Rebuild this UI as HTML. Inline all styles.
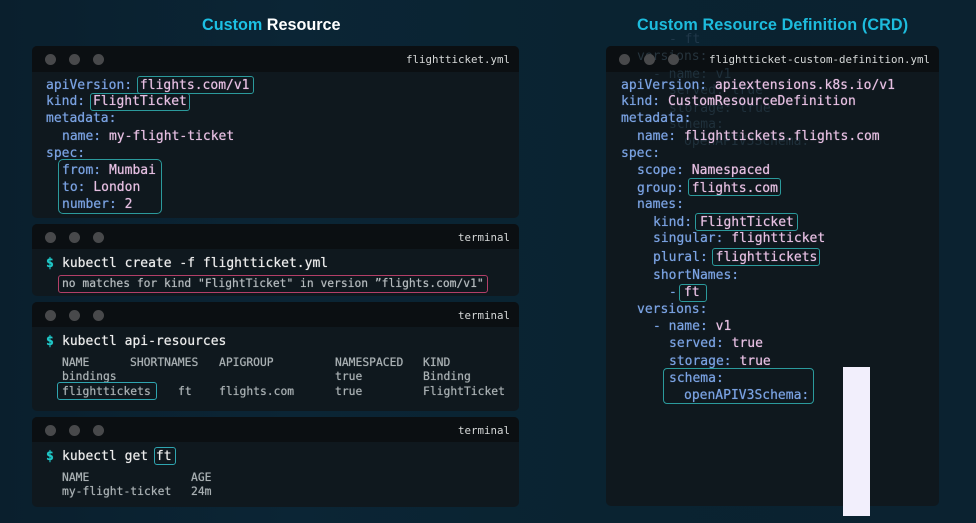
<!DOCTYPE html>
<html><head><meta charset="utf-8">
<style>
html,body{margin:0;padding:0}
body{width:976px;height:523px;overflow:hidden;position:relative;background:linear-gradient(90deg,#0a1f2d 0%,#0b2535 30%,#0a2331 60%,#0b2230 100%);font-family:"DejaVu Sans Mono","Liberation Mono",monospace}
div{position:absolute;box-sizing:border-box}
.p{background:#0f181e;border-radius:5px}
.h{left:0;top:0;right:0;height:26px;background:#0b0f12;border-radius:5px 5px 0 0}
.d{width:11px;height:11px;border-radius:50%;background:#48494b;top:8px}
.t{white-space:pre;font-size:13px;line-height:16px;height:16px;color:#e6bfe2;text-shadow:0 0 .6px currentColor}
.k{color:#7aa2e2}.v{color:#e6bfe2}
.c{color:#ececec;font-size:13px}
.s{font-size:11.35px;color:#a9b0b3}
.e{font-size:11.3px;color:#b4babd}
.f{font-size:10.8px;color:#d6d8d8;white-space:pre;line-height:16px;height:16px}
.b{border:1.2px solid #2b9a9c;border-radius:3px}
.g{color:#1f303b;white-space:pre;font-size:13px;line-height:16px;height:16px}
.ti{font-family:"Liberation Sans",sans-serif;font-weight:700;font-size:16.2px;line-height:20px;white-space:pre;height:20px}
</style></head><body>

<div class="ti" style="left:202px;top:15px"><span style="color:#1cc0e4">Custom</span><span style="color:#fff"> Resource</span></div>
<div class="ti" style="left:637px;top:15px;color:#1dbcdd;letter-spacing:.1px">Custom Resource Definition (CRD)</div>

<div class="p" style="left:32px;top:46px;width:487px;height:172px"><div class="h"></div>
<div class="d" style="left:13px"></div><div class="d" style="left:37px"></div><div class="d" style="left:61px"></div></div>
<div class="f" style="left:406px;top:52px">flightticket.yml</div>

<div class="p" style="left:32px;top:224px;width:487px;height:72px"><div class="h" style="height:25px"></div>
<div class="d" style="left:13px"></div><div class="d" style="left:37px"></div><div class="d" style="left:61px"></div></div>
<div class="f" style="left:458px;top:230px">terminal</div>

<div class="p" style="left:32px;top:302px;width:487px;height:109px"><div class="h" style="height:25px"></div>
<div class="d" style="left:13px"></div><div class="d" style="left:37px"></div><div class="d" style="left:61px"></div></div>
<div class="f" style="left:458px;top:308px">terminal</div>

<div class="p" style="left:32px;top:417px;width:487px;height:90px"><div class="h" style="height:25px"></div>
<div class="d" style="left:13px"></div><div class="d" style="left:37px"></div><div class="d" style="left:61px"></div></div>
<div class="f" style="left:458px;top:423px">terminal</div>

<div class="p" style="left:606px;top:46px;width:333px;height:460px"><div class="h"></div></div>

<div class="g" style="left:669px;top:32px;color:#20384a">- ft</div>
<div class="g" style="left:637px;top:49px;color:#26343d">versions:</div>
<div class="g" style="left:653px;top:67px">- name: v1</div>
<div class="g" style="left:669px;top:83px">served: true</div>
<div class="g" style="left:669px;top:101px">storage: true</div>
<div class="g" style="left:669px;top:117px">schema:</div>
<div class="g" style="left:684px;top:134px">openAPIV3Schema:</div>

<div class="d" style="left:619px;top:54px"></div>
<div class="d" style="left:644px;top:54px"></div>
<div class="d" style="left:668px;top:54px"></div>
<div class="f" style="left:709px;top:52px">flightticket-custom-definition.yml</div>

<!-- left yaml -->
<div class="t" style="left:46px;top:78px"><span class="k">apiVersion:</span> <span class="v">flights.com/v1</span></div>
<div class="b" style="left:137px;top:76px;width:117px;height:18px"></div>
<div class="t" style="left:46px;top:94px"><span class="k">kind:</span> <span class="v">FlightTicket</span></div>
<div class="b" style="left:90px;top:93px;width:100px;height:18px"></div>
<div class="t" style="left:46px;top:111px"><span class="k">metadata:</span></div>
<div class="t" style="left:62px;top:129px"><span class="k">name:</span> <span class="v">my-flight-ticket</span></div>
<div class="t" style="left:46px;top:146px"><span class="k">spec:</span></div>
<div class="t" style="left:62px;top:163px"><span class="k">from:</span> <span class="v">Mumbai</span></div>
<div class="t" style="left:62px;top:180px"><span class="k">to:</span> <span class="v">London</span></div>
<div class="t" style="left:62px;top:197px"><span class="k">number:</span> <span class="v">2</span></div>
<div class="b" style="left:58px;top:159px;width:104px;height:55px;border-radius:5px"></div>

<!-- term 1 -->
<div class="t" style="left:46px;top:256px;color:#1fc9c9;font-weight:700">$</div>
<div class="t c" style="left:62px;top:256px">kubectl create -f flightticket.yml</div>
<div class="t e" style="left:62px;top:276px">no matches for kind "FlightTicket" in version ”flights.com/v1"</div>
<div class="b" style="left:58px;top:275px;width:430px;height:18px;border-color:#b33f68"></div>

<!-- term 2 -->
<div class="t" style="left:46px;top:334px;color:#1fc9c9;font-weight:700">$</div>
<div class="t c" style="left:62px;top:334px">kubectl api-resources</div>
<div class="t s" style="left:62px;top:354px">NAME</div>
<div class="t s" style="left:130px;top:354px">SHORTNAMES</div>
<div class="t s" style="left:219px;top:354px">APIGROUP</div>
<div class="t s" style="left:335px;top:354px">NAMESPACED</div>
<div class="t s" style="left:423px;top:354px">KIND</div>
<div class="t s" style="left:62px;top:368px">bindings</div>
<div class="t s" style="left:335px;top:368px">true</div>
<div class="t s" style="left:423px;top:368px">Binding</div>
<div class="t s" style="left:62px;top:383px">flighttickets</div>
<div class="t s" style="left:178px;top:383px">ft</div>
<div class="t s" style="left:219px;top:383px">flights.com</div>
<div class="t s" style="left:335px;top:383px">true</div>
<div class="t s" style="left:423px;top:383px">FlightTicket</div>
<div class="b" style="left:57px;top:382px;width:100px;height:18px;border-color:#2fa5b0"></div>

<!-- term 3 -->
<div class="t" style="left:46px;top:449px;color:#1fc9c9;font-weight:700">$</div>
<div class="t c" style="left:62px;top:449px">kubectl get ft</div>
<div class="b" style="left:154px;top:447px;width:22px;height:18px;border-color:#2fa5b0"></div>
<div class="t s" style="left:62px;top:469px">NAME</div>
<div class="t s" style="left:191px;top:469px">AGE</div>
<div class="t s" style="left:62px;top:483px">my-flight-ticket</div>
<div class="t s" style="left:191px;top:483px">24m</div>

<!-- right yaml -->
<div class="t" style="left:621px;top:78px"><span class="k">apiVersion:</span> <span class="v">apiextensions.k8s.io/v1</span></div>
<div class="t" style="left:621px;top:94px"><span class="k">kind:</span> <span class="v">CustomResourceDefinition</span></div>
<div class="t" style="left:621px;top:111px"><span class="k">metadata:</span></div>
<div class="t" style="left:637px;top:129px"><span class="k">name:</span> <span class="v">flighttickets.flights.com</span></div>
<div class="t" style="left:621px;top:146px"><span class="k">spec:</span></div>
<div class="t" style="left:637px;top:163px"><span class="k">scope:</span> <span class="v">Namespaced</span></div>
<div class="t" style="left:637px;top:181px"><span class="k">group:</span> <span class="v">flights.com</span></div>
<div class="b" style="left:688px;top:178px;width:93px;height:18px"></div>
<div class="t" style="left:637px;top:197px"><span class="k">names:</span></div>
<div class="t" style="left:653px;top:215px"><span class="k">kind:</span> <span class="v">FlightTicket</span></div>
<div class="b" style="left:695px;top:213px;width:103px;height:18px"></div>
<div class="t" style="left:653px;top:231px"><span class="k">singular:</span> <span class="v">flightticket</span></div>
<div class="t" style="left:653px;top:250px"><span class="k">plural:</span> <span class="v">flighttickets</span></div>
<div class="b" style="left:712px;top:248px;width:108px;height:18px"></div>
<div class="t" style="left:653px;top:268px"><span class="k">shortNames:</span></div>
<div class="t" style="left:669px;top:285px"><span class="k">-</span></div>
<div class="t" style="left:684px;top:285px"><span class="v">ft</span></div>
<div class="b" style="left:679px;top:284px;width:28px;height:18px"></div>
<div class="t" style="left:637px;top:302px"><span class="k">versions:</span></div>
<div class="t" style="left:653px;top:319px"><span class="k">- name:</span> <span class="v">v1</span></div>
<div class="t" style="left:669px;top:336px"><span class="k">served:</span> <span class="v">true</span></div>
<div class="t" style="left:669px;top:354px"><span class="k">storage:</span> <span class="v">true</span></div>
<div class="t" style="left:669px;top:371px"><span class="k">schema:</span></div>
<div class="t" style="left:684px;top:388px"><span class="k">openAPIV3Schema:</span></div>
<div class="b" style="left:663px;top:368px;width:151px;height:36px;border-radius:4px"></div>

<div style="left:843px;top:367px;width:27px;height:149px;background:#f2effc"></div>
</body></html>
